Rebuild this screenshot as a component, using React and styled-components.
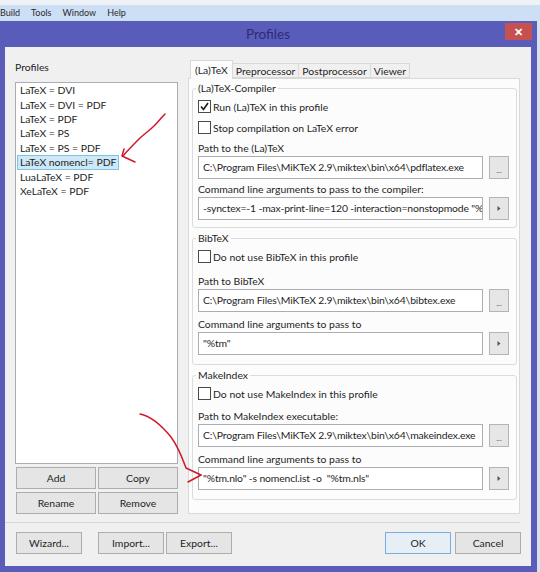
import React from "react";
import styled, { createGlobalStyle } from "styled-components";

const GlobalStyle = createGlobalStyle`
  html, body {
    margin: 0;
    padding: 0;
  }
  body {
    width: 540px;
    height: 572px;
    overflow: hidden;
    background: #d9e2ec;
    font-family: Lato, "Noto Sans", sans-serif;
    font-size: 10.4px;
    color: #1e1e1e;
  }
`;

const Page = styled.div`
  position: relative;
  width: 540px;
  height: 572px;
`;

const MenuBar = styled.div`
  height: 21px;
  box-sizing: border-box;
  border-top: 5px solid #eef1f5;
  background: #cddff5;
  display: flex;
  align-items: center;
  gap: 11px;

  span {
    font-size: 9px;
    line-height: 16px;
    color: #2a2a2a;
  }
`;

const Frame = styled.div`
  width: 537px;
  height: 551px;
  box-sizing: border-box;
  background: #5a5cb9;
  padding: 0 6px 6px 5px;
  display: flex;
  flex-direction: column;
`;

const TitleBar = styled.div`
  height: 26px;
  display: grid;
  grid-template-columns: 1fr auto 1fr;
  align-items: start;
`;

const Title = styled.div`
  grid-column: 2;
  font-size: 13.5px;
  line-height: 26px;
  color: #2b2d78;
`;

const CloseButton = styled.div`
  grid-column: 3;
  justify-self: end;
  margin: 2px -1px 0 0;
  width: 27px;
  height: 17px;
  background: #c75050;
  color: #fff;
  font-size: 11px;
  font-weight: bold;
  line-height: 17px;
  text-align: center;
`;

const Client = styled.div`
  flex: 1;
  background: #f0f0f0;
  padding: 13px 11px 12px 10px;
  display: flex;
  flex-direction: column;
`;

const MainRow = styled.div`
  height: 454px;
  display: flex;
  gap: 10px;
`;

const LeftPanel = styled.div`
  width: 163px;
  flex-shrink: 0;
  display: flex;
  flex-direction: column;
`;

const PanelLabel = styled.div`
  line-height: 14px;
  margin-bottom: 8px;
`;

const ListBox = styled.div`
  flex: 1;
  background: #fff;
  border: 1px solid #abadb3;
  padding: 0 0 0 1px;
`;

const ListItem = styled.div`
  width: fit-content;
  height: 14.43px;
  padding: 0 2px;
  box-sizing: border-box;
  border: 1px solid ${(p) => (p.$selected ? "#7fc3e3" : "transparent")};
  background: ${(p) => (p.$selected ? "#cde8f6" : "transparent")};
  white-space: nowrap;
  display: flex;
  align-items: center;
  line-height: 12px;
`;

const ButtonGrid = styled.div`
  margin-top: 3px;
  padding-left: 1px;
  display: grid;
  grid-template-columns: 1fr 1fr;
  gap: 3px 2px;
`;

const Button = styled.div`
  height: 22px;
  width: ${(p) => (p.$width ? `${p.$width}px` : "auto")};
  margin-left: ${(p) => p.$ml || 0}px;
  box-sizing: border-box;
  border: 1px solid ${(p) => (p.$default ? "#7aaee0" : "#adadad")};
  background: ${(p) => (p.$default ? "#e6eef6" : "#e5e5e5")};
  display: flex;
  align-items: center;
  justify-content: center;
  line-height: 14px;
`;

const RightPanel = styled.div`
  flex: 1;
  min-width: 0;
  display: flex;
  flex-direction: column;
`;

const TabStrip = styled.div`
  height: 18px;
  display: flex;
  align-items: flex-end;
  padding-left: 3px;
  position: relative;
  z-index: 1;
`;

const Tab = styled.div`
  height: ${(p) => (p.$active ? 19 : 15)}px;
  margin-bottom: ${(p) => (p.$active ? -1 : 0)}px;
  box-sizing: border-box;
  padding: ${(p) => (p.$active ? 2 : 0)}px ${(p) => (p.$active ? 4 : 3)}px 0;
  border: 1px solid #d9d9d9;
  border-bottom: ${(p) => (p.$active ? "none" : "1px solid #d9d9d9")};
  margin-left: -1px;
  background: ${(p) => (p.$active ? "#fcfcfc" : "#f0f0f0")};
  display: flex;
  align-items: ${(p) => (p.$active ? "flex-start" : "center")};
  line-height: 14px;
  white-space: nowrap;
`;

const TabPanel = styled.div`
  flex: 1;
  border: 1px solid #d9d9d9;
  background: #fcfcfc;
  padding: 2px 2px 0 3px;
  display: flex;
  flex-direction: column;
  gap: 3px;
`;

const Group = styled.fieldset`
  margin: 0;
  min-width: 0;
  padding: 1px 7px ${(p) => p.$pb}px 5px;
  border: 1px solid #dcdcdc;
  border-radius: 3px;
`;

const Legend = styled.legend`
  padding: 0 2px;
  margin-left: -2px;
  line-height: 14px;
`;

const CheckRow = styled.div`
  height: 21px;
  display: flex;
  align-items: center;
  gap: 2px;
`;

const CheckBox = styled.div`
  width: 13px;
  height: 13px;
  box-sizing: border-box;
  border: 1px solid #4a4a4a;
  background: #fff;
  display: flex;
  align-items: center;
  justify-content: center;
`;

const FieldLabel = styled.div`
  margin-top: ${(p) => p.$mt}px;
  line-height: 16px;
`;

const InputRow = styled.div`
  height: 23px;
  display: flex;
  gap: 6px;
`;

const TextBox = styled.div`
  flex: 1;
  min-width: 0;
  box-sizing: border-box;
  border: 1px solid #abadb3;
  background: #fff;
  padding: 0 4px;
  line-height: 21px;
  letter-spacing: -0.15px;
  white-space: pre;
  overflow: hidden;
`;

const SmallButton = styled.div`
  width: 20px;
  flex-shrink: 0;
  box-sizing: border-box;
  border: 1px solid #b4b4b4;
  background: #e6e6e6;
  display: flex;
  align-items: center;
  justify-content: center;
  color: #555;
  font-size: 8px;
  line-height: 8px;
`;

const Dots = styled.span`
  margin-top: 5px;
`;

const Separator = styled.div`
  margin: 8px 0 0 -10px;
  height: 1px;
  background: #d6d6d6;
`;

const BottomRow = styled.div`
  margin-top: 9px;
  padding-left: 1px;
  margin-right: -1px;
  display: flex;
  gap: 2px;
`;

const Spacer = styled.div`
  flex: 1;
`;

const Overlay = styled.svg`
  position: absolute;
  left: 0;
  top: 0;
  pointer-events: none;
`;

const profiles = [
  "LaTeX = DVI",
  "LaTeX = DVI = PDF",
  "LaTeX = PDF",
  "LaTeX = PS",
  "LaTeX = PS = PDF",
  "LaTeX nomencl= PDF",
  "LuaLaTeX = PDF",
  "XeLaTeX = PDF",
];

function Check({ checked, children }) {
  return (
    <CheckRow>
      <CheckBox>
        {checked && (
          <svg width="9" height="9" viewBox="0 0 9 9">
            <polyline points="1,4.5 3.5,7.5 8,1" fill="none" stroke="#1a1a1a" strokeWidth="1.6" />
          </svg>
        )}
      </CheckBox>
      <span>{children}</span>
    </CheckRow>
  );
}

function Field({ mt, label, value, browse }) {
  return (
    <>
      <FieldLabel $mt={mt}>{label}</FieldLabel>
      <InputRow>
        <TextBox>{value}</TextBox>
        <SmallButton>
          {browse ? (
            <Dots>...</Dots>
          ) : (
            <svg width="6" height="7" viewBox="0 0 6 7">
              <polygon points="1.5,1 4.5,3.5 1.5,6" fill="#555" />
            </svg>
          )}
        </SmallButton>
      </InputRow>
    </>
  );
}

export default function App() {
  return (
    <Page>
      <GlobalStyle />
      <MenuBar>
        <span>Build</span>
        <span>Tools</span>
        <span>Window</span>
        <span>Help</span>
      </MenuBar>
      <Frame>
        <TitleBar>
          <Title>Profiles</Title>
          <CloseButton>✕</CloseButton>
        </TitleBar>
        <Client>
          <MainRow>
            <LeftPanel>
              <PanelLabel>Profiles</PanelLabel>
              <ListBox>
                {profiles.map((p) => (
                  <ListItem key={p} $selected={p === "LaTeX nomencl= PDF"}>
                    {p}
                  </ListItem>
                ))}
              </ListBox>
              <ButtonGrid>
                <Button>Add</Button>
                <Button>Copy</Button>
                <Button>Rename</Button>
                <Button>Remove</Button>
              </ButtonGrid>
            </LeftPanel>
            <RightPanel>
              <TabStrip>
                <Tab $active>(La)TeX</Tab>
                <Tab>Preprocessor</Tab>
                <Tab>Postprocessor</Tab>
                <Tab>Viewer</Tab>
              </TabStrip>
              <TabPanel>
                <Group $pb={7}>
                  <Legend>(La)TeX-Compiler</Legend>
                  <Check checked>Run (La)TeX in this profile</Check>
                  <Check>Stop compilation on LaTeX error</Check>
                  <Field
                    mt={2}
                    label="Path to the (La)TeX"
                    value="C:\Program Files\MiKTeX 2.9\miktex\bin\x64\pdflatex.exe"
                    browse
                  />
                  <Field
                    mt={2}
                    label="Command line arguments to pass to the compiler:"
                    value='-synctex=-1 -max-print-line=120 -interaction=nonstopmode "%.tex"'
                  />
                </Group>
                <Group $pb={9}>
                  <Legend>BibTeX</Legend>
                  <Check>Do not use BibTeX in this profile</Check>
                  <Field
                    mt={6}
                    label="Path to BibTeX"
                    value="C:\Program Files\MiKTeX 2.9\miktex\bin\x64\bibtex.exe"
                    browse
                  />
                  <Field mt={4} label="Command line arguments to pass to" value='"%tm"' />
                </Group>
                <Group $pb={9}>
                  <Legend>MakeIndex</Legend>
                  <Check>Do not use MakeIndex in this profile</Check>
                  <Field
                    mt={4}
                    label="Path to MakeIndex executable:"
                    value="C:\Program Files\MiKTeX 2.9\miktex\bin\x64\makeindex.exe"
                    browse
                  />
                  <Field
                    mt={4}
                    label="Command line arguments to pass to"
                    value='"%tm.nlo" -s nomencl.ist -o  "%tm.nls"'
                  />
                </Group>
              </TabPanel>
            </RightPanel>
          </MainRow>
          <Separator />
          <BottomRow>
            <Button $width={66}>Wizard...</Button>
            <Button $width={66} $ml={14}>Import...</Button>
            <Button $width={66}>Export...</Button>
            <Spacer />
            <Button $width={66} $default>OK</Button>
            <Button $width={66} $ml={2}>Cancel</Button>
          </BottomRow>
        </Client>
      </Frame>
      <Overlay width="540" height="572" viewBox="0 0 540 572">
        <g fill="none" stroke="#d0192b" strokeWidth="1.5" strokeLinecap="round" strokeLinejoin="round">
          <path d="M165 114 C 160 119, 158 122, 154 126 C 149 131, 144 134, 139 139 C 133 145, 128 150, 123 156" />
          <path d="M124 149 L 122 156 L 135 162" />
          <path d="M140 414 C 150 416, 162 426, 171 437 C 179 448, 183 460, 186 468 L 201 475" />
          <path d="M188 482 L 201 475" />
        </g>
      </Overlay>
    </Page>
  );
}
